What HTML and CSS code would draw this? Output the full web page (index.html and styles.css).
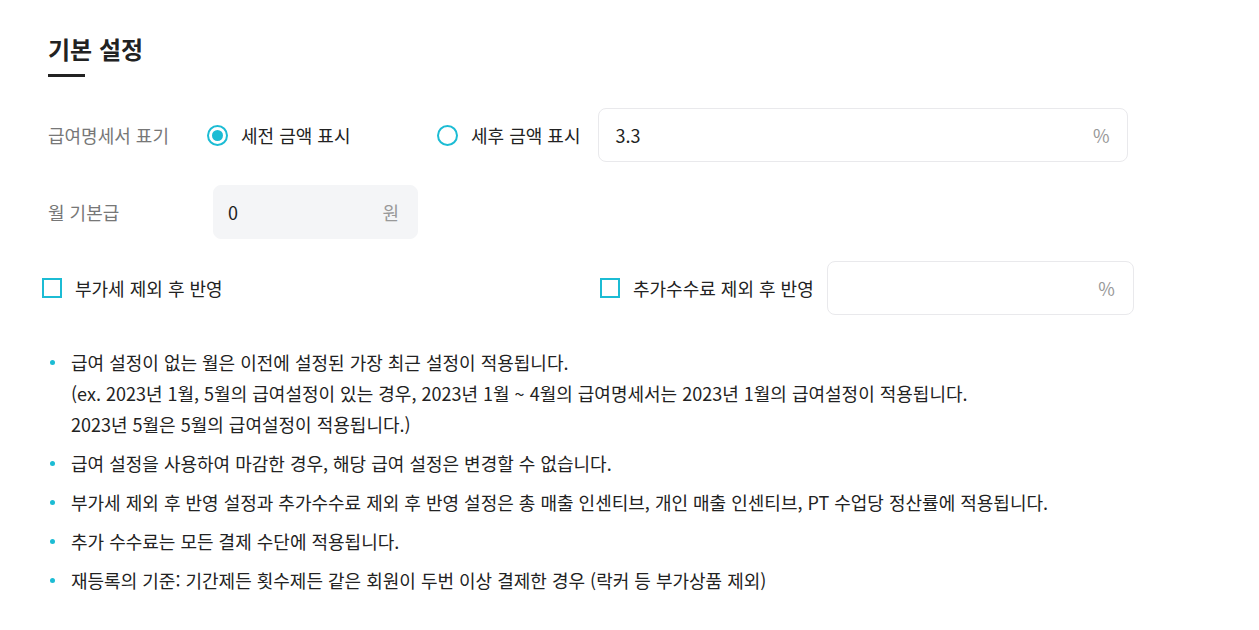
FILE: index.html
```html
<!DOCTYPE html>
<html lang="ko">
  <head>
    <meta charset="UTF-8" />
    <meta name="viewport" content="width=device-width, initial-scale=1.0" />
    <title>기본 설정</title>
    <link rel="stylesheet" href="styles.css">
  </head>
  <body>
    <div class="container">
      <h2 class="section-title">기본 설정</h2>
      <div class="title-bar"></div>

      <div class="form-row first">
        <div class="row-label">급여명세서 표기</div>
        <label class="radio-option">
          <span class="radio checked"></span>
          <span>세전 금액 표시</span>
        </label>
        <label class="radio-option narrow">
          <span class="radio"></span>
          <span>세후 금액 표시</span>
        </label>
        <div class="text-field wide">
          <span class="value">3.3</span>
          <span class="unit">%</span>
        </div>
      </div>

      <div class="form-row second">
        <div class="row-label long">월 기본급</div>
        <div class="text-field filled">
          <span class="value">0</span>
          <span class="unit">원</span>
        </div>
      </div>

      <div class="form-row third">
        <label class="check-option left">
          <span class="checkbox"></span>
          <span>부가세 제외 후 반영</span>
        </label>
        <label class="check-option">
          <span class="checkbox"></span>
          <span>추가수수료 제외 후 반영</span>
        </label>
        <div class="text-field fee">
          <span class="value"></span>
          <span class="unit">%</span>
        </div>
      </div>

      <ul class="notes">
        <li>
          급여 설정이 없는 월은 이전에 설정된 가장 최근 설정이 적용됩니다.<br />
          (ex. 2023년 1월, 5월의 급여설정이 있는 경우, 2023년 1월 ~ 4월의 급여명세서는 2023년 1월의 급여설정이 적용됩니다.<br />
          2023년 5월은 5월의 급여설정이 적용됩니다.)
        </li>
        <li>급여 설정을 사용하여 마감한 경우, 해당 급여 설정은 변경할 수 없습니다.</li>
        <li>부가세 제외 후 반영 설정과 추가수수료 제외 후 반영 설정은 총 매출 인센티브, 개인 매출 인센티브, PT 수업당 정산률에 적용됩니다.</li>
        <li>추가 수수료는 모든 결제 수단에 적용됩니다.</li>
        <li>재등록의 기준: 기간제든 횟수제든 같은 회원이 두번 이상 결제한 경우 (락커 등 부가상품 제외)</li>
      </ul>
    </div>
  </body>
</html>
```

FILE: styles.css
```css
body {
  font-family: "Noto Sans CJK KR", "Noto Sans", sans-serif;
  margin: 0;
  padding: 0;
  background-color: #fff;
  color: #222;
}
.container {
  padding: 34px 48px;
}
.section-title {
  margin: 0;
  font-size: 24px;
  line-height: 30px;
  font-weight: 700;
  color: #222;
}
.title-bar {
  width: 37px;
  height: 3px;
  margin-top: 10px;
  background-color: #222;
}
.form-row {
  display: flex;
  align-items: center;
  height: 54px;
  font-size: 18px;
}
.form-row.first {
  margin-top: 31px;
}
.form-row.second {
  margin-top: 23px;
}
.form-row.third {
  margin-top: 22px;
  margin-left: -6px;
}
.row-label {
  width: 159px;
  color: #777;
}
.row-label.long {
  width: 165px;
}
.radio-option {
  display: flex;
  align-items: center;
  gap: 13px;
  width: 230px;
  color: #222;
}
.radio-option.narrow {
  width: auto;
  margin-right: 18px;
}
.radio {
  box-sizing: border-box;
  width: 21px;
  height: 21px;
  border: 2px solid #1cbcd4;
  border-radius: 50%;
  position: relative;
}
.radio.checked::after {
  content: "";
  position: absolute;
  top: 3px;
  left: 3px;
  width: 11px;
  height: 11px;
  border-radius: 50%;
  background-color: #1cbcd4;
}
.text-field {
  box-sizing: border-box;
  display: flex;
  align-items: center;
  justify-content: space-between;
  height: 54px;
  padding: 0 18px 0 16px;
  border: 1px solid #e9e9ec;
  border-radius: 8px;
  background-color: #fff;
}
.text-field.wide {
  width: 530px;
}
.text-field.filled {
  width: 205px;
  padding-left: 14px;
  border-color: #f4f5f7;
  background-color: #f4f5f7;
}
.text-field.fee {
  width: 307px;
}
.text-field .value {
  color: #222;
}
.text-field .unit {
  color: #999;
}
.check-option {
  display: flex;
  align-items: center;
  gap: 13px;
  color: #222;
}
.check-option.left {
  width: 558px;
}
.check-option + .check-option {
  margin-right: 13px;
}
.checkbox {
  box-sizing: border-box;
  width: 20px;
  height: 20px;
  border: 2px solid #1cbcd4;
}
.notes {
  list-style: none;
  margin: 32px 0 0;
  padding: 0;
  font-size: 18px;
  line-height: 31px;
  color: #222;
}
.notes li {
  position: relative;
  padding-left: 23px;
  margin-bottom: 8px;
}
.notes li::before {
  content: "";
  position: absolute;
  left: 2px;
  top: 13px;
  width: 5px;
  height: 5px;
  border-radius: 50%;
  background-color: #1cbcd4;
}
```
